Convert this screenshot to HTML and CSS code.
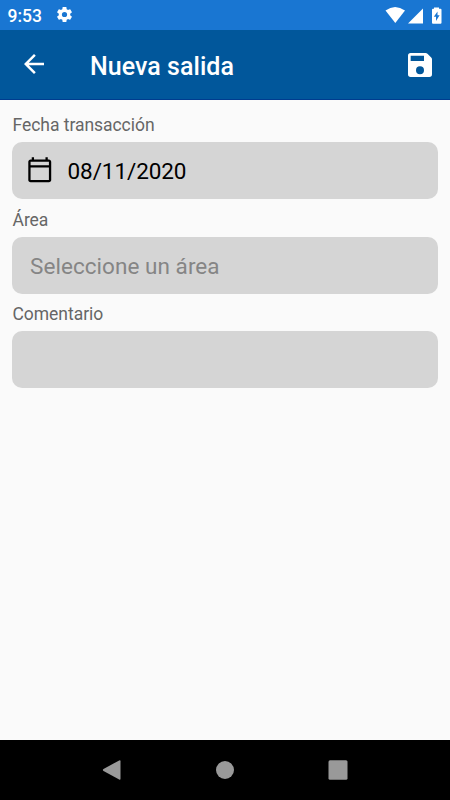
FILE: index.html
```html
<!DOCTYPE html>
<html lang="es">
<head>
<meta charset="utf-8">
<title>Nueva salida</title>
<link rel="stylesheet" href="styles.css">
</head>
<body>
<div class="screen">
  <div class="status">
    <span class="time">9:53</span>
    <svg class="gear" viewBox="0 0 24 24"><path d="M19.14 12.94c.04-.3.06-.61.06-.94 0-.32-.02-.64-.07-.94l2.03-1.58c.18-.14.23-.41.12-.61l-1.92-3.32c-.12-.22-.37-.29-.59-.22l-2.39.96c-.5-.38-1.03-.7-1.62-.94l-.36-2.54c-.04-.24-.24-.41-.48-.41h-3.84c-.24 0-.43.17-.47.41l-.36 2.54c-.59.24-1.13.57-1.62.94l-2.39-.96c-.22-.08-.47 0-.59.22L2.74 8.87c-.12.21-.08.47.12.61l2.03 1.58c-.05.3-.09.63-.09.94s.02.64.07.94l-2.03 1.58c-.18.14-.23.41-.12.61l1.92 3.32c.12.22.37.29.59.22l2.39-.96c.5.38 1.03.7 1.62.94l.36 2.54c.05.24.24.41.48.41h3.84c.24 0 .44-.17.47-.41l.36-2.54c.59-.24 1.13-.56 1.62-.94l2.39.96c.22.08.47 0 .59-.22l1.92-3.32c.12-.22.07-.47-.12-.61zM12 15.3a3.3 3.3 0 1 1 0-6.6 3.3 3.3 0 0 1 0 6.6z"/></svg>
    <svg class="signals" viewBox="0 0 60 20">
      <path d="M.5 4.500Q10-2.500 20 4.500L10.300 17z"/>
      <path d="M38 2.500v15H23z"/>
      <path fill-rule="evenodd" d="M49 2.700V1.500h5v1.200h1.500q1 0 1 1V16.800q0 1-1 1h-7.500q-1 0-1-1V3.700q0-1 1-1zm3.500 2.800-3.700 5.300h2.200v4.300l3.600-5.800h-2.100z"/>
    </svg>
  </div>
  <header class="appbar">
    <svg class="back" viewBox="0 0 24 24"><path d="M20 11H7.830l5.590-5.590L12 4l-8 8 8 8 1.410-1.410L7.830 13H20z"/></svg>
    <h1 class="title">Nueva salida</h1>
    <svg class="save" viewBox="0 0 24 24"><path d="M15 9H5V5h10m-3 14a3 3 0 0 1-3-3 3 3 0 0 1 3-3 3 3 0 0 1 3 3 3 3 0 0 1-3 3m4.200-16H5a2 2 0 0 0-2 2v14a2 2 0 0 0 2 2h14a2 2 0 0 0 2-2V7.800q0-.8-.6-1.400L17.600 3.600Q17 3 16.200 3z"/></svg>
  </header>
  <main class="form">
    <div class="label">Fecha transacción</div>
    <div class="field date">
      <svg class="calendar" viewBox="0 0 24 24"><path d="M20 3h-1V1h-2v2H7V1H5v2H4c-1.100 0-2 .9-2 2v16c0 1.100.9 2 2 2h16c1.100 0 2-.9 2-2V5c0-1.100-.9-2-2-2zm0 18H4V10h16zm0-13H4V5h16z"/></svg>
      <span>08/11/2020</span>
    </div>
    <div class="label">Área</div>
    <div class="field placeholder">Seleccione un área</div>
    <div class="label">Comentario</div>
    <div class="field"></div>
  </main>
  <nav class="navbar">
    <svg viewBox="0 0 24 24"><path d="M19.500 3.200V20.800q0 1.500-1.300.8L2.500 13q-1.300-1 0-2L18.200 2.400q1.300-.7 1.300.8z"/></svg>
    <svg viewBox="0 0 24 24"><circle cx="12" cy="12" r="9"/></svg>
    <svg viewBox="0 0 24 24"><rect x="2.500" y="2.300" width="19" height="19.500" rx="1.500"/></svg>
  </nav>
</div>
</body>
</html>
```
FILE: styles.css
```css
* { box-sizing: border-box; }
body { margin: 0; font-family: Roboto, sans-serif; }
.screen {
  width: 450px;
  height: 800px;
  display: flex;
  flex-direction: column;
  background: #fafafa;
}
svg { display: block; flex: none; fill: #fff; }
.status {
  height: 30px;
  display: flex;
  align-items: center;
  padding: 0 5px 0 7.5px;
  background: #1976d2;
  color: #fff;
}
.time { width: 47px; font-size: 17.5px; font-weight: 500; line-height: 30px; padding-top: 2px; }
.gear { width: 19px; height: 19px; margin-top: -1px; }
.signals { width: 60px; height: 20px; margin-left: auto; margin-top: 1px; }
.appbar {
  height: 70px;
  display: flex;
  align-items: center;
  padding: 0 14px 0 19px;
  background: #01579b;
  border-bottom: 1px solid #003c8f;
  color: #fff;
}
.back { width: 30px; height: 30px; margin-top: -1px; }
.title { flex: 1; margin: 0; padding: 4px 0 0 41px; font-size: 25px; font-weight: 500; line-height: 30px; letter-spacing: 0.05px; }
.save { width: 32px; height: 32px; }
.form { flex: 1; padding: 12px 12.5px; }
.label { height: 30px; font-size: 17.5px; line-height: 26px; letter-spacing: -0.04px; color: #666; }
.field {
  height: 57px;
  margin: 0 0 7.5px -0.5px;
  padding: 1px 18px 0;
  display: flex;
  align-items: center;
  border-radius: 10px;
  background: #d5d5d5;
  font-size: 22.5px;
  color: #000;
}
.date { padding-left: 14px; letter-spacing: -0.08px; }
.calendar { width: 27.5px; height: 27.5px; margin: -2px 14px 0 0; fill: #000; }
.placeholder { color: #858585; letter-spacing: 0.05px; }
.navbar {
  height: 60px;
  display: flex;
  align-items: center;
  justify-content: center;
  gap: 88.5px;
  background: #000;
}
.navbar svg { width: 24px; height: 24px; fill: #999; }
```
